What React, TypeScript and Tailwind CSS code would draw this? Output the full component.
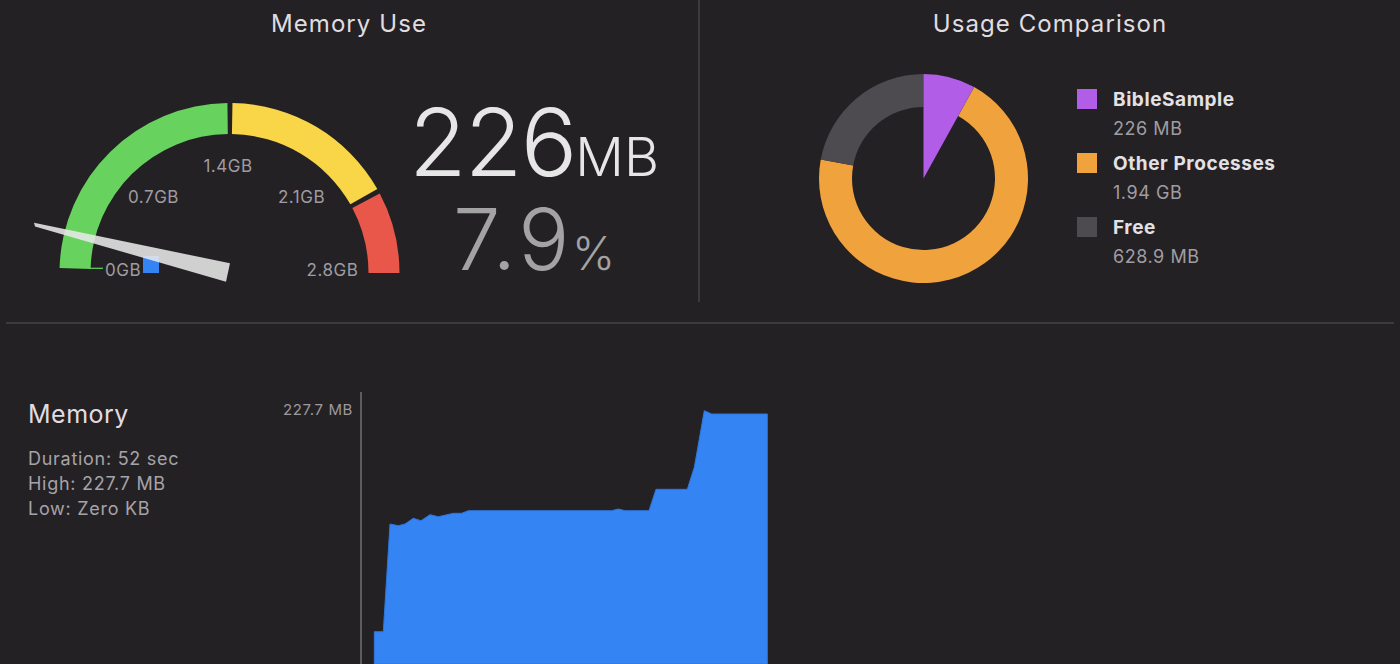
import React from 'react';

const GCX = 229.5;
const GCY = 213; // gauge centre inside its svg (svg top sits at page y=60)
const R_OUT = 170;
const R_IN = 139;

function polar(cx: number, cy: number, r: number, deg: number) {
  const a = (deg * Math.PI) / 180;
  return [cx + r * Math.cos(a), cy - r * Math.sin(a)];
}

// arc band going clockwise on screen from angle a1 down to a2 (math degrees)
function band(a1: number, a2: number) {
  const [x1, y1] = polar(GCX, GCY, R_OUT, a1);
  const [x2, y2] = polar(GCX, GCY, R_OUT, a2);
  const [x3, y3] = polar(GCX, GCY, R_IN, a2);
  const [x4, y4] = polar(GCX, GCY, R_IN, a1);
  return `M${x1} ${y1} A${R_OUT} ${R_OUT} 0 0 1 ${x2} ${y2} L${x3} ${y3} A${R_IN} ${R_IN} 0 0 0 ${x4} ${y4} Z`;
}

// donut helpers: angles clockwise from top
const DC = 105.5;
const DR = 104.5;
const Dr = 71.5;

function dpt(r: number, deg: number) {
  const a = (deg * Math.PI) / 180;
  return [DC + r * Math.sin(a), DC - r * Math.cos(a)];
}

function ring(a1: number, a2: number) {
  const large = a2 - a1 > 180 ? 1 : 0;
  const [x1, y1] = dpt(DR, a1);
  const [x2, y2] = dpt(DR, a2);
  const [x3, y3] = dpt(Dr, a2);
  const [x4, y4] = dpt(Dr, a1);
  return `M${x1} ${y1} A${DR} ${DR} 0 ${large} 1 ${x2} ${y2} L${x3} ${y3} A${Dr} ${Dr} 0 ${large} 0 ${x4} ${y4} Z`;
}

function wedge(a1: number, a2: number) {
  const [x1, y1] = dpt(DR, a1);
  const [x2, y2] = dpt(DR, a2);
  return `M${DC} ${DC} L${x1} ${y1} A${DR} ${DR} 0 0 1 ${x2} ${y2} Z`;
}

const chartPoints = [
  [12.3, 272], [12.3, 239.7], [21.3, 239.7], [28, 132], [36.3, 133.7], [43, 132],
  [51.3, 126.3], [59, 128.7], [68, 122.7], [76.3, 124.7], [91.3, 121.3], [99.7, 121.3],
  [106.3, 118.7], [249.7, 118.7], [256.3, 117], [263, 118.7], [287, 118.7], [294, 97.3],
  [325.3, 97.3], [332.3, 75.3], [342.3, 18.7], [349.7, 22], [405.3, 22], [405.3, 272],
];

const gaugeLabels = [
  { t: '0GB', x: 123, y: 209.5 },
  { t: '0.7GB', x: 153.5, y: 137 },
  { t: '1.4GB', x: 228, y: 105.5 },
  { t: '2.1GB', x: 301.5, y: 137 },
  { t: '2.8GB', x: 332.5, y: 209.5 },
];

const legend = [
  { color: 'bg-[#b15de7]', label: 'BibleSample', value: '226 MB' },
  { color: 'bg-[#f0a23c]', label: 'Other Processes', value: '1.94 GB' },
  { color: 'bg-[#4d4b50]', label: 'Free', value: '628.9 MB' },
];

function Gauge() {
  return (
    <svg width="410" height="230" className="shrink-0">
      <path d={band(178.3, 90.7)} fill="#67d35e" />
      <path d={band(89.0, 29.6)} fill="#f9d648" />
      <path d={band(27.9, 0)} fill="#e9574a" />
      <line x1="90" y1="208.3" x2="103" y2="208.3" stroke="#67d35e" strokeWidth="1.2" />
      {gaugeLabels.map((l) => (
        <text
          key={l.t}
          x={l.x}
          y={l.y + 6}
          textAnchor="middle"
          className="fill-[#9f9ca0] text-[17px] tracking-[0.03em]"
        >
          {l.t}
        </text>
      ))}
      <rect x="143" y="196" width="16" height="17" fill="#3584f4" />
      <polygon points="34,162.7 230,203.3 226,221.7 35,166.5" fill="#e8e8e8" fillOpacity="0.88" />
    </svg>
  );
}

function Donut() {
  return (
    <svg width="211" height="211" className="shrink-0 mt-[13px]">
      <path d={ring(29, 280.5)} fill="#f0a23c" />
      <path d={ring(280.5, 360)} fill="#4d4b50" />
      <path d={wedge(0, 29)} fill="#b15de7" />
    </svg>
  );
}

export default function App() {
  return (
    <div className="h-[664px] w-[1400px] overflow-hidden bg-[#242125] font-['Inter',sans-serif] text-[#e0dde1]">
      {/* top panels */}
      <div className="flex h-[302px]">
        <div className="flex w-[698px] flex-col">
          <h2 className="pt-[12px] text-center text-[24px] leading-none tracking-[0.045em]">Memory Use</h2>
          <div className="mt-[24px] flex">
            <Gauge />
            <div className="flex w-[248px] flex-col items-center pt-[35px] font-light">
              <div className="flex items-baseline text-[#e6e6e6]">
                <span className="text-[94px] leading-none tracking-[-0.02em]">226</span>
                <span className="text-[54px] leading-none">MB</span>
              </div>
              <div className="mt-[8px] flex items-baseline text-[#a3a3a3]">
                <span className="text-[85px] leading-none tracking-[0.03em]">7.9</span>
                <span className="text-[46px] leading-none">%</span>
              </div>
            </div>
          </div>
        </div>
        <div className="w-[2px] bg-[#3d3a3e]" />
        <div className="flex flex-1 flex-col">
          <h2 className="pt-[12px] text-center text-[24px] leading-none tracking-[0.045em]">Usage Comparison</h2>
          <div className="mt-[24px] flex pl-[118px]">
            <Donut />
            <div className="ml-[48px] flex flex-col gap-[14px] pt-[29px]">
              {legend.map((l) => (
                <div key={l.label} className="flex items-start gap-4">
                  <div className={`h-5 w-5 ${l.color}`} />
                  <div className="flex flex-col pt-[1px]">
                    <span className="text-[19px] font-bold leading-[20px] tracking-[0.03em] text-[#e4e1e5]">
                      {l.label}
                    </span>
                    <span className="mt-[9px] text-[18px] leading-[20px] tracking-[0.03em] text-[#a09da1]">
                      {l.value}
                    </span>
                  </div>
                </div>
              ))}
            </div>
          </div>
        </div>
      </div>

      <div className="mx-[6px] mt-[20px] h-[2px] bg-[#3d3a3e]" />

      {/* memory timeline */}
      <div className="flex h-[340px]">
        <div className="flex w-[360px] justify-between pt-[78px]">
          <div className="pl-[28px]">
            <h3 className="text-[25px] leading-none tracking-[0.02em]">Memory</h3>
            <div className="mt-[19px] text-[18px] leading-[25px] tracking-[0.04em] text-[#a6a3a7]">
              <p>Duration: 52 sec</p>
              <p>High: 227.7 MB</p>
              <p>Low: Zero KB</p>
            </div>
          </div>
          <span className="pr-[7px] text-[15px] leading-none tracking-[0.04em] text-[#9c999d]">227.7 MB</span>
        </div>
        <div className="mt-[68px] w-[2px] bg-[#5f5c60]" />
        <svg width="420" height="272" className="mt-[68px] shrink-0">
          <polygon
            points={chartPoints.map((p) => p.join(',')).join(' ')}
            fill="#3584f4"
            stroke="#2f76dc"
            strokeWidth="1"
          />
        </svg>
      </div>
    </div>
  );
}
